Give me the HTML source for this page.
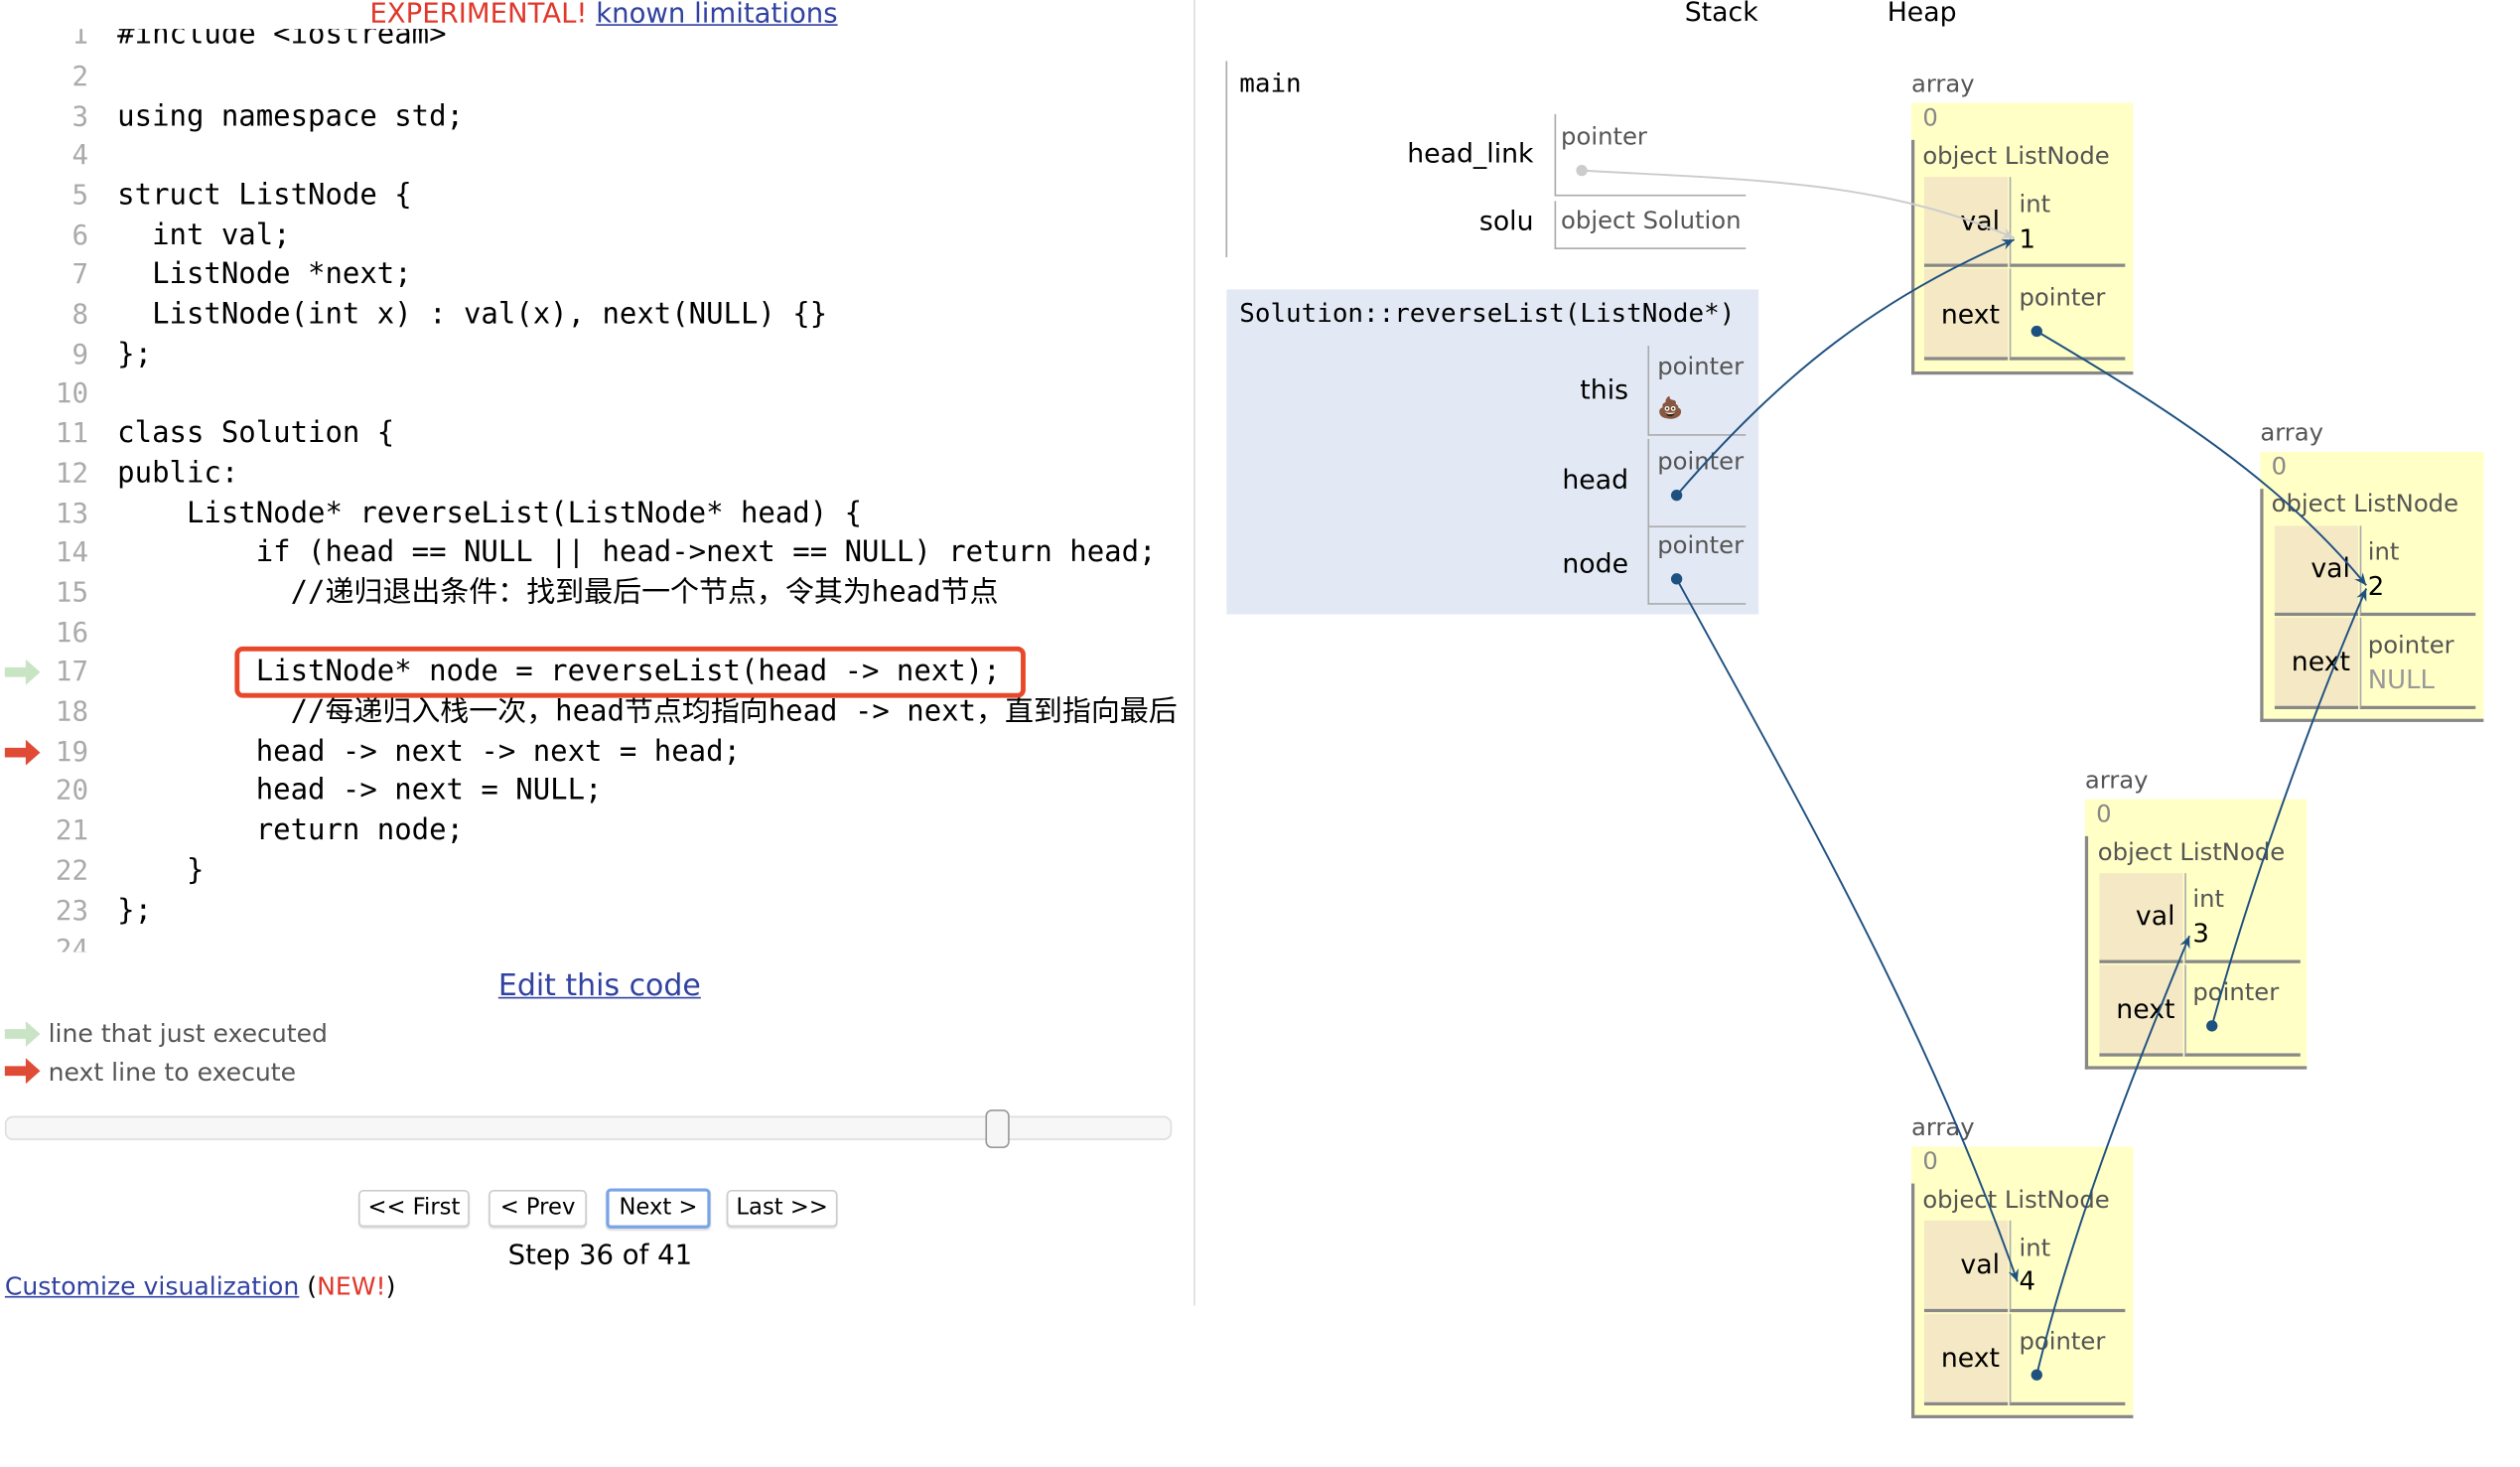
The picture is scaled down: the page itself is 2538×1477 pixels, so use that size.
<!DOCTYPE html>
<html><head><meta charset="utf-8"><style>
html,body{margin:0;padding:0;background:#fff;width:2538px;height:1476px;overflow:hidden}
#w{position:absolute;left:0;top:0;width:1545px;height:912px;transform:scale(1.619);transform-origin:0 0;font-family:"DejaVu Sans","Liberation Sans",sans-serif}
.a{position:absolute;white-space:pre;line-height:20px}
.m{font-family:"DejaVu Sans Mono","Liberation Mono","Noto Sans CJK SC",monospace;font-size:17.9px;color:#000}
.ln{font-family:"DejaVu Sans Mono","Liberation Mono",monospace;font-size:17px;color:#aaa;text-align:right;width:40px;left:15px}
.lk{color:#3142a0;text-decoration:underline}
.g{color:#555}
.lbl{font-size:16.5px;color:#000;text-align:right}
.sm{font-size:15px;color:#555}
.box{position:absolute;border-left:1px solid #aaa;border-bottom:1px solid #aaa}
.obj{position:absolute;background:#ffffc6}
.frm{position:absolute;border-left:2px solid #888;border-bottom:2px solid #888}
.vc{position:absolute;background:#f5e9c5;border-bottom:2px solid #888}
.ic{position:absolute;border-left:1px solid #aaa;border-bottom:2px solid #888}
.btn{position:absolute;top:740px;height:21px;border:1px solid #ccc;border-radius:3px;font-size:14px;line-height:21px;text-align:center;background:#fff;box-shadow:0 1px 1px #ddd}
</style></head><body><div id="w">

<div class="a" style="left:230px;top:-1px;font-size:17px;color:#e0382b">EXPERIMENTAL! <span class="lk">known limitations</span></div>

<div style="position:absolute;left:0;top:18px;width:742px;height:574px;overflow:hidden">
<div class="a ln" style="top:-6px">1</div><div class="a m" style="left:73px;top:-6px">#include &lt;iostream&gt;</div>
</div>
<div class="a ln" style="top:38px">2</div>
<div class="a ln" style="top:63px">3</div><div class="a m" style="left:73px;top:63px">using namespace std;</div>
<div class="a ln" style="top:87px">4</div>
<div class="a ln" style="top:112px">5</div><div class="a m" style="left:73px;top:112px">struct ListNode {</div>
<div class="a ln" style="top:137px">6</div><div class="a m" style="left:73px;top:137px">  int val;</div>
<div class="a ln" style="top:161px">7</div><div class="a m" style="left:73px;top:161px">  ListNode *next;</div>
<div class="a ln" style="top:186px">8</div><div class="a m" style="left:73px;top:186px">  ListNode(int x) : val(x), next(NULL) {}</div>
<div class="a ln" style="top:211px">9</div><div class="a m" style="left:73px;top:211px">};</div>
<div class="a ln" style="top:235px">10</div>
<div class="a ln" style="top:260px">11</div><div class="a m" style="left:73px;top:260px">class Solution {</div>
<div class="a ln" style="top:285px">12</div><div class="a m" style="left:73px;top:285px">public:</div>
<div class="a ln" style="top:310px">13</div><div class="a m" style="left:73px;top:310px">    ListNode* reverseList(ListNode* head) {</div>
<div class="a ln" style="top:334px">14</div><div class="a m" style="left:73px;top:334px">        if (head == NULL || head-&gt;next == NULL) return head;</div>
<div class="a ln" style="top:359px">15</div><div class="a m" style="left:73px;top:359px">          //递归退出条件：找到最后一个节点，令其为head节点</div>
<div class="a ln" style="top:384px">16</div>
<div class="a ln" style="top:408px">17</div><div class="a m" style="left:73px;top:408px">        ListNode* node = reverseList(head -&gt; next);</div>
<div class="a ln" style="top:433px">18</div><div class="a m" style="left:73px;top:433px">          //每递归入栈一次，head节点均指向head -&gt; next，直到指向最后</div>
<div class="a ln" style="top:458px">19</div><div class="a m" style="left:73px;top:458px">        head -&gt; next -&gt; next = head;</div>
<div class="a ln" style="top:482px">20</div><div class="a m" style="left:73px;top:482px">        head -&gt; next = NULL;</div>
<div class="a ln" style="top:507px">21</div><div class="a m" style="left:73px;top:507px">        return node;</div>
<div class="a ln" style="top:532px">22</div><div class="a m" style="left:73px;top:532px">    }</div>
<div class="a ln" style="top:557px">23</div><div class="a m" style="left:73px;top:557px">};</div>
<div style="position:absolute;left:0;top:581px;width:100px;height:11px;overflow:hidden"><div class="a ln" style="top:0">24</div></div>

<div style="position:absolute;left:146px;top:402px;width:486px;height:26px;border:3px solid #e8482a;border-radius:5px"></div>

<svg style="position:absolute;left:0;top:0" width="1545" height="899">
<defs>
<marker id="ah" viewBox="0 0 10 10" refX="9" refY="5" markerWidth="7" markerHeight="7" orient="auto"><path d="M0,1 L9,5 L0,9 L3,5z" fill="#1f5180"/></marker>
<marker id="ag" viewBox="0 0 10 10" refX="9" refY="5" markerWidth="7" markerHeight="7" orient="auto"><path d="M0,1 L9,5 L0,9 L3,5z" fill="#ccc"/></marker>
</defs>
<path d="M3,415 h13 v-5 l9,8 l-9,8 v-5 h-13z" fill="#c9e4c5"/>
<path d="M3,465 h13 v-5 l9,8 l-9,8 v-5 h-13z" fill="#e04b36"/>
<path d="M3,640 h13 v-5 l9,8 l-9,8 v-5 h-13z" fill="#c9e4c5"/>
<path d="M3,663 h13 v-5 l9,8 l-9,8 v-5 h-13z" fill="#e04b36"/>
<line x1="743" y1="0" x2="743" y2="812" stroke="#ddd" stroke-width="1"/>
<line x1="763" y1="38" x2="763" y2="160" stroke="#aaa" stroke-width="1"/>
</svg>

<div class="a lk" style="left:310px;top:604px;font-size:18.5px">Edit this code</div>
<div class="a g" style="left:30px;top:633px;font-size:15.5px">line that just executed</div>
<div class="a g" style="left:30px;top:657px;font-size:15.5px">next line to execute</div>
<div style="position:absolute;left:3px;top:694px;width:724px;height:13px;background:#f7f7f7;border:1px solid #ddd;border-radius:5px"></div>
<div style="position:absolute;left:613px;top:690px;width:13px;height:22px;background:#f6f6f6;border:1px solid #999;border-radius:4px"></div>
<div class="btn" style="left:223px;width:67px">&lt;&lt; First</div>
<div class="btn" style="left:304px;width:59px">&lt; Prev</div>
<div class="btn" style="left:377px;width:61px;border:2px solid #7aa4e8;top:739px">Next &gt;</div>
<div class="btn" style="left:452px;width:67px">Last &gt;&gt;</div>
<div class="a" style="left:316px;top:771px;font-size:17px">Step 36 of 41</div>
<div class="a" style="left:3px;top:790px;font-size:15.5px"><span class="lk">Customize visualization</span> (<span style="color:#e0382b">NEW!</span>)</div>

<div class="a" style="left:1048px;top:-2px;font-size:16.5px">Stack</div>
<div class="a" style="left:1174px;top:-2px;font-size:16.5px">Heap</div>

<div class="a m" style="left:771px;top:42px;font-size:16px">main</div>
<div class="a lbl" style="left:850px;width:104px;top:86px">head_link</div>
<div class="box" style="left:967px;top:71px;width:118px;height:50px"></div>
<div class="a sm" style="left:971px;top:75px">pointer</div>
<div class="a lbl" style="left:850px;width:104px;top:128px">solu</div>
<div class="box" style="left:967px;top:125px;width:118px;height:29px"></div>
<div class="a sm" style="left:971px;top:127px">object Solution</div>

<div style="position:absolute;left:763px;top:180px;width:331px;height:202px;background:#e3e9f4"></div>
<div class="a m" style="left:771px;top:185px;font-size:16px">Solution::reverseList(ListNode*)</div>
<div class="a lbl" style="left:900px;width:113px;top:233px">this</div>
<div class="box" style="left:1025px;top:215px;width:60px;height:55px"></div>
<div class="a sm" style="left:1031px;top:218px">pointer</div>
<div class="a" style="left:1031px;top:245px;font-size:13px">💩</div>
<div class="a lbl" style="left:900px;width:113px;top:289px">head</div>
<div class="box" style="left:1025px;top:273px;width:60px;height:54px"></div>
<div class="a sm" style="left:1031px;top:277px">pointer</div>
<div class="a lbl" style="left:900px;width:113px;top:341px">node</div>
<div class="box" style="left:1025px;top:327px;width:60px;height:48px"></div>
<div class="a sm" style="left:1031px;top:329px">pointer</div>

<!-- heap objects -->
<div class="a sm" style="left:1189px;top:42px">array</div>
<div class="obj" style="left:1189px;top:64px;width:138px;height:167px"></div>
<div class="frm" style="left:1189px;top:87px;width:136px;height:144px"></div>
<div class="a sm" style="left:1196px;top:63px;color:#888">0</div>
<div class="a sm" style="left:1196px;top:87px">object ListNode</div>
<div class="vc" style="left:1197px;top:110px;width:52px;height:54px"></div>
<div class="ic" style="left:1250px;top:110px;width:71px;height:54px"></div>
<div class="vc" style="left:1197px;top:167px;width:52px;height:55px"></div>
<div class="ic" style="left:1250px;top:167px;width:71px;height:55px"></div>
<div class="a lbl" style="left:1197px;width:47px;top:128px">val</div>
<div class="a lbl" style="left:1197px;width:47px;top:186px">next</div>
<div class="a sm" style="left:1256px;top:117px">int</div>
<div class="a" style="left:1256px;top:139px;font-size:16px">1</div>
<div class="a sm" style="left:1256px;top:175px">pointer</div>

<div class="a sm" style="left:1406px;top:259px">array</div>
<div class="obj" style="left:1406px;top:281px;width:139px;height:166px"></div>
<div class="frm" style="left:1406px;top:304px;width:137px;height:143px"></div>
<div class="a sm" style="left:1413px;top:280px;color:#888">0</div>
<div class="a sm" style="left:1413px;top:303px">object ListNode</div>
<div class="vc" style="left:1415px;top:327px;width:52px;height:54px"></div>
<div class="ic" style="left:1468px;top:327px;width:71px;height:54px"></div>
<div class="vc" style="left:1415px;top:384px;width:52px;height:55px"></div>
<div class="ic" style="left:1468px;top:384px;width:71px;height:55px"></div>
<div class="a lbl" style="left:1415px;width:47px;top:344px">val</div>
<div class="a lbl" style="left:1415px;width:47px;top:402px">next</div>
<div class="a sm" style="left:1473px;top:333px">int</div>
<div class="a" style="left:1473px;top:355px;font-size:16px">2</div>
<div class="a sm" style="left:1473px;top:391px">pointer</div>
<div class="a" style="left:1473px;top:413px;font-size:16px;color:#999">NULL</div>

<div class="a sm" style="left:1297px;top:475px">array</div>
<div class="obj" style="left:1297px;top:497px;width:138px;height:166px"></div>
<div class="frm" style="left:1297px;top:520px;width:136px;height:143px"></div>
<div class="a sm" style="left:1304px;top:496px;color:#888">0</div>
<div class="a sm" style="left:1305px;top:520px">object ListNode</div>
<div class="vc" style="left:1306px;top:543px;width:52px;height:54px"></div>
<div class="ic" style="left:1359px;top:543px;width:71px;height:54px"></div>
<div class="vc" style="left:1306px;top:600px;width:52px;height:55px"></div>
<div class="ic" style="left:1359px;top:600px;width:71px;height:55px"></div>
<div class="a lbl" style="left:1306px;width:47px;top:560px">val</div>
<div class="a lbl" style="left:1306px;width:47px;top:618px">next</div>
<div class="a sm" style="left:1364px;top:549px">int</div>
<div class="a" style="left:1364px;top:571px;font-size:16px">3</div>
<div class="a sm" style="left:1364px;top:607px">pointer</div>

<div class="a sm" style="left:1189px;top:691px">array</div>
<div class="obj" style="left:1189px;top:713px;width:138px;height:167px"></div>
<div class="frm" style="left:1189px;top:736px;width:136px;height:144px"></div>
<div class="a sm" style="left:1196px;top:712px;color:#888">0</div>
<div class="a sm" style="left:1196px;top:736px">object ListNode</div>
<div class="vc" style="left:1197px;top:759px;width:52px;height:55px"></div>
<div class="ic" style="left:1250px;top:759px;width:71px;height:55px"></div>
<div class="vc" style="left:1197px;top:817px;width:52px;height:55px"></div>
<div class="ic" style="left:1250px;top:817px;width:71px;height:55px"></div>
<div class="a lbl" style="left:1197px;width:47px;top:777px">val</div>
<div class="a lbl" style="left:1197px;width:47px;top:835px">next</div>
<div class="a sm" style="left:1256px;top:766px">int</div>
<div class="a" style="left:1256px;top:787px;font-size:16px">4</div>
<div class="a sm" style="left:1256px;top:824px">pointer</div>

<svg style="position:absolute;left:0;top:0" width="1545" height="899">
<g fill="none" stroke-width="1.2">
<path d="M984,106 C1090,112 1170,112 1253,148" stroke="#ccc" marker-end="url(#ag)"/>
<path d="M1043,308 C1110,230 1170,185 1253,149" stroke="#1f5180" marker-end="url(#ah)"/>
<path d="M1267,206 C1350,255 1420,300 1472,364" stroke="#1f5180" marker-end="url(#ah)"/>
<path d="M1376,638 C1400,550 1440,440 1472,366" stroke="#1f5180" marker-end="url(#ah)"/>
<path d="M1267,855 C1290,760 1330,660 1362,582" stroke="#1f5180" marker-end="url(#ah)"/>
<path d="M1043,360 C1120,500 1200,640 1255,797" stroke="#1f5180" marker-end="url(#ah)"/>
</g>
<circle cx="984" cy="106" r="3.5" fill="#ccc"/>
<circle cx="1043" cy="308" r="3.5" fill="#1f5180"/>
<circle cx="1043" cy="360" r="3.5" fill="#1f5180"/>
<circle cx="1267" cy="206" r="3.5" fill="#1f5180"/>
<circle cx="1376" cy="638" r="3.5" fill="#1f5180"/>
<circle cx="1267" cy="855" r="3.5" fill="#1f5180"/>
</svg>
</div></body></html>
